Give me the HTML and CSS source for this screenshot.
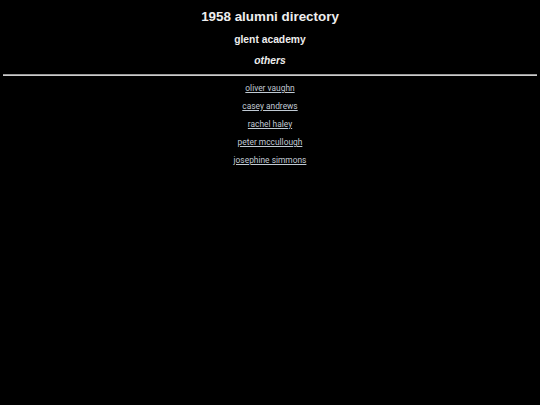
FILE: index.html
```html
<!DOCTYPE html>
<html>
<head>
<meta charset="utf-8">
<link rel="stylesheet" href="styles.css">
</head>
<body>
<header class="head">
  <h1 class="title">1958 alumni directory</h1>
  <h2 class="school">glent academy</h2>
  <h3 class="group">others</h3>
</header>
<hr class="rule">
<ul class="list">
  <li><a href="#">oliver vaughn</a></li>
  <li><a href="#">casey andrews</a></li>
  <li><a href="#">rachel haley</a></li>
  <li><a href="#">peter mccullough</a></li>
  <li><a href="#">josephine simmons</a></li>
</ul>
</body>
</html>
```
FILE: styles.css
```css
html, body { background: #000; }
body {
  margin: 0;
  padding: 0 3px;
  font-family: "Liberation Sans", Arial, sans-serif;
  color: #eeeeee;
  text-align: center;
}
.head { padding-top: 8px; }
.title {
  margin: 0;
  font-size: 13.4px;
  line-height: 17px;
  font-weight: bold;
}
.school {
  margin: 8px 0 0;
  font-size: 10.3px;
  line-height: 14px;
  font-weight: bold;
}
.group {
  margin: 7px 0 0;
  font-size: 10.3px;
  line-height: 14px;
  font-weight: bold;
  font-style: italic;
}
.rule {
  margin: 6px 0 0;
  border: 0;
  border-top: 1px solid #999;
  border-bottom: 1px solid #ccc;
  height: 0;
}
.list {
  list-style: none;
  margin: 7px 0 0;
  padding: 0;
  display: grid;
  grid-auto-rows: 11px;
  row-gap: 7px;
  font-family: Roboto, "Liberation Sans", sans-serif;
}
.list li {
  font-size: 8.4px;
  line-height: 11px;
}
.list a { color: #c0cad4; }
```
